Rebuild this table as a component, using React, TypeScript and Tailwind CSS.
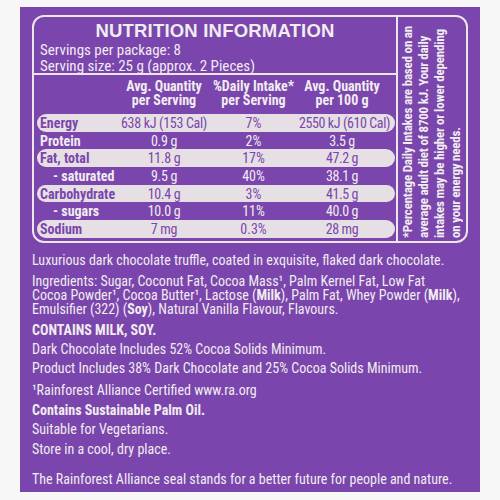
const font = "font-['Liberation_Sans_Narrow','Roboto_Condensed','Liberation_Sans',sans-serif]";

type Row = { label: string; serving: string; daily: string; per100: string; sub?: boolean };

const rows: Row[] = [
  { label: 'Energy', serving: '638 kJ (153 Cal)', daily: '7%', per100: '2550 kJ (610 Cal)' },
  { label: 'Protein', serving: '0.9 g', daily: '2%', per100: '3.5 g' },
  { label: 'Fat, total', serving: '11.8 g', daily: '17%', per100: '47.2 g' },
  { label: '- saturated', serving: '9.5 g', daily: '40%', per100: '38.1 g', sub: true },
  { label: 'Carbohydrate', serving: '10.4 g', daily: '3%', per100: '41.5 g' },
  { label: '- sugars', serving: '10.0 g', daily: '11%', per100: '40.0 g', sub: true },
  { label: 'Sodium', serving: '7 mg', daily: '0.3%', per100: '28 mg' },
];

const NutritionRow = ({ row, shaded }: { row: Row; shaded: boolean }) => (
  <div
    className={`flex items-center w-[358px] h-[17.7px] text-[14px] leading-none whitespace-nowrap rounded-full ${
      shaded ? 'bg-[#e6e0e4] text-[#7a46ad]' : 'text-[#f1ecef]'
    }`}
  >
    <div className={`w-[83px] shrink-0 font-bold ${row.sub ? 'pl-[16px]' : 'pl-[3px]'}`}>{row.label}</div>
    <div className="w-[88px] shrink-0 text-center tracking-[-0.3px]">{row.serving}</div>
    <div className="w-[91px] shrink-0 text-center">{row.daily}</div>
    <div className="w-[86px] shrink-0 text-center tracking-[-0.4px]">{row.per100}</div>
  </div>
);

const App = () => {
  return (
    <div className={`w-[500px] h-[500px] bg-[#f8f7f8] pt-[7px] pl-[20px] ${font}`}>
      <div className="w-[460px] h-[485px] overflow-hidden bg-[#7a46ad] px-[12px] pt-[8px] text-[#f1ecef]">
        <div className="flex h-[228px] border-2 border-[#ece6ea] rounded-[12px]">
          <div className="w-[364px] shrink-0 border-r-2 border-[#ece6ea] flex flex-col">
            <div className="h-[58px] border-b-2 border-[#ece6ea] px-[6px] pt-[3px]">
              <div className="text-center font-bold text-[18.5px] leading-[22px] font-['Liberation_Sans',sans-serif] tracking-[0.2px]">
                NUTRITION INFORMATION
              </div>
              <div className="text-[15px] leading-[16px]">Servings per package: 8</div>
              <div className="text-[15px] leading-[16px]">Serving size: 25 g (approx. 2 Pieces)</div>
            </div>
            <div className="pl-[3px] pt-[4px]">
              <div className="flex font-bold text-[14px] leading-[14px] h-[35px] whitespace-nowrap">
                <div className="w-[83px] shrink-0" />
                <div className="w-[88px] shrink-0 text-center">Avg. Quantity<br />per Serving</div>
                <div className="w-[91px] shrink-0 text-center">%Daily Intake*<br />per Serving</div>
                <div className="w-[86px] shrink-0 text-center">Avg. Quantity<br />per 100 g</div>
              </div>
              {rows.map((row, i) => (
                <NutritionRow key={row.label} row={row} shaded={i % 2 === 0} />
              ))}
            </div>
          </div>
          <div className="flex-1 flex items-end justify-center pb-[3px] overflow-hidden">
            <div className="[writing-mode:vertical-rl] rotate-180 font-bold text-[13px] leading-[16px] tracking-[-0.2px] whitespace-nowrap">
              *Percentage Daily Intakes are based on an<br />
              average adult diet of 8700 kJ. Your daily<br />
              intakes may be higher or lower depending<br />
              on your energy needs.
            </div>
          </div>
        </div>

        <div className="pt-[10px] text-[14px] leading-[14px] flex flex-col whitespace-nowrap">
          <p>Luxurious dark chocolate truffle, coated in exquisite, flaked dark chocolate.</p>
          <p className="mt-[7px]">
            Ingredients: Sugar, Coconut Fat, Cocoa Mass¹, Palm Kernel Fat, Low Fat<br />
            Cocoa Powder¹, Cocoa Butter¹, Lactose (<b>Milk</b>), Palm Fat, Whey Powder (<b>Milk</b>),<br />
            Emulsifier (322) (<b>Soy</b>), Natural Vanilla Flavour, Flavours.
          </p>
          <p className="mt-[7px] font-bold">CONTAINS MILK, SOY.</p>
          <p className="mt-[5px]">Dark Chocolate Includes 52% Cocoa Solids Minimum.</p>
          <p className="mt-[5px]">Product Includes 38% Dark Chocolate and 25% Cocoa Solids Minimum.</p>
          <p className="mt-[8px]">¹Rainforest Alliance Certified www.ra.org</p>
          <p className="mt-[6px] font-bold">Contains Sustainable Palm Oil.</p>
          <p className="mt-[5px]">Suitable for Vegetarians.</p>
          <p className="mt-[6px]">Store in a cool, dry place.</p>
          <p className="mt-[16px]">The Rainforest Alliance seal stands for a better future for people and nature.</p>
        </div>
      </div>
    </div>
  );
};

export default App;
